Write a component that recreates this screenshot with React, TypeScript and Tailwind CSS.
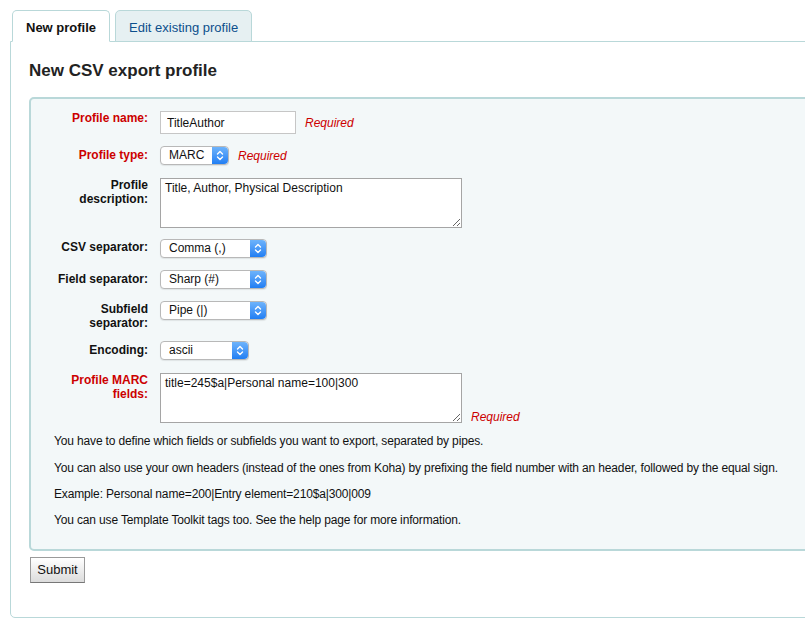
import React from 'react';

const Arrows: React.FC = () => (
  <div className="w-[16px] self-stretch rounded-r-[4px] bg-gradient-to-b from-[#6db3fb] to-[#1f7ef3] flex items-center justify-center">
    <svg width="8" height="11" viewBox="0 0 8 11" fill="none" stroke="white" strokeWidth="1.4" strokeLinecap="round" strokeLinejoin="round">
      <path d="M1.5 4 L4 1.5 L6.5 4" />
      <path d="M1.5 7 L4 9.5 L6.5 7" />
    </svg>
  </div>
);

const Select: React.FC<{ value: string; width: string }> = ({ value, width }) => (
  <div className={`${width} h-[19px] flex bg-white border border-[#b8b8b8] rounded-[4px] shadow-[0_1px_1px_rgba(0,0,0,0.08)]`}>
    <div className="flex-1 pl-[8px] text-[12px] leading-[17px]">{value}</div>
    <Arrows />
  </div>
);

const Required: React.FC = () => (
  <span className="ml-[9px] text-[12px] italic text-[#cc0000]">Required</span>
);

interface RowProps {
  label: React.ReactNode;
  required?: boolean;
  height: string;
  labelPad: string;
  children: React.ReactNode;
}

const Row: React.FC<RowProps> = ({ label, required, height, labelPad, children }) => (
  <div className={`flex items-start ${height}`}>
    <label
      className={`w-[117px] shrink-0 text-right text-[12px] leading-[14px] font-bold ${labelPad} ${
        required ? 'text-[#cc0000]' : 'text-[#111]'
      }`}
    >
      {label}
    </label>
    <div className="ml-[12px] flex">{children}</div>
  </div>
);

const App: React.FC = () => {
  return (
    <div className="w-[805px] h-[630px] overflow-hidden bg-white font-['Liberation_Sans',Arial,sans-serif] text-[#111]">
      <div className="pl-[10px] pt-[10px] w-[840px]">
        {/* tabs */}
        <div className="flex gap-[5px] pl-[2px] relative z-10 -mb-px">
          <div className="h-[32px] px-[13px] pt-[7px] bg-white border border-[#b9d8d9] border-b-white rounded-t-[5px] text-[13px] font-bold text-[#111]">
            New profile
          </div>
          <div className="h-[32px] px-[13px] pt-[7px] bg-[#e6f0f2] border border-[#b9d8d9] rounded-t-[5px] text-[13px] text-[#0c4f8c]">
            Edit existing profile
          </div>
        </div>

        {/* panel */}
        <div className="h-[577px] border border-[#b9d8d9] rounded-b-[5px] pl-[18px] pt-[19px]">
          <h1 className="text-[17px] leading-[20px] font-bold text-[#222]">New CSV export profile</h1>

          <fieldset className="mt-[16px] border-2 border-[#b9d8d9] rounded-[5px] bg-[#f3f8f9] pt-[12px] pb-[22px]">
            <Row label="Profile name:" required height="h-[35px]" labelPad="pt-0">
              <div className="flex items-center">
                <input
                  readOnly
                  value="TitleAuthor"
                  className="w-[136px] h-[23px] bg-white border border-[#c6c6c6] px-[6px] text-[12px] outline-none"
                />
                <Required />
              </div>
            </Row>
            <Row label="Profile type:" required height="h-[32px]" labelPad="pt-[2px]">
              <div className="flex items-center">
                <Select value="MARC" width="w-[69px]" />
                <Required />
              </div>
            </Row>
            <Row label={<>Profile<br />description:</>} height="h-[61px]" labelPad="pt-0">
              <textarea
                readOnly
                defaultValue="Title, Author, Physical Description"
                className="w-[302px] h-[50px] bg-white border border-[#a5a5a5] px-[4px] py-[2px] text-[12px] leading-[14px] outline-none"
              />
            </Row>
            <Row label="CSV separator:" height="h-[31px]" labelPad="pt-[1px]">
              <Select value="Comma (,)" width="w-[107px]" />
            </Row>
            <Row label="Field separator:" height="h-[31px]" labelPad="pt-[2px]">
              <Select value="Sharp (#)" width="w-[107px]" />
            </Row>
            <Row label={<>Subfield<br />separator:</>} height="h-[40px]" labelPad="pt-[1px]">
              <Select value="Pipe (|)" width="w-[107px]" />
            </Row>
            <Row label="Encoding:" height="h-[32px]" labelPad="pt-[2px]">
              <Select value="ascii" width="w-[89px]" />
            </Row>
            <Row label={<>Profile MARC<br />fields:</>} required height="h-[61px]" labelPad="pt-0">
              <div className="flex items-end">
                <textarea
                  readOnly
                  defaultValue="title=245$a|Personal name=100|300"
                  className="w-[302px] h-[50px] bg-white border border-[#a5a5a5] px-[4px] py-[2px] text-[12px] leading-[14px] outline-none"
                />
                <span className="mb-[-5px]">
                  <Required />
                </span>
              </div>
            </Row>

            <div className="pl-[23px] text-[12px] leading-[14px] tracking-[-0.15px] text-[#111]">
              <p className="mb-[13px]">You have to define which fields or subfields you want to export, separated by pipes.</p>
              <p className="mb-[12px]">
                You can also use your own headers (instead of the ones from Koha) by prefixing the field number with an
                header, followed by the equal sign.
              </p>
              <p className="mb-[12px]">Example: Personal name=200|Entry element=210$a|300|009</p>
              <p>You can use Template Toolkit tags too. See the help page for more information.</p>
            </div>
          </fieldset>

          <button className="mt-[6px] ml-[1px] w-[55px] h-[26px] border border-[#9a9a9a] border-b-[#777] bg-gradient-to-b from-white to-[#dcdcdc] text-[13px] text-[#111]">
            Submit
          </button>
        </div>
      </div>
    </div>
  );
};

export default App;
